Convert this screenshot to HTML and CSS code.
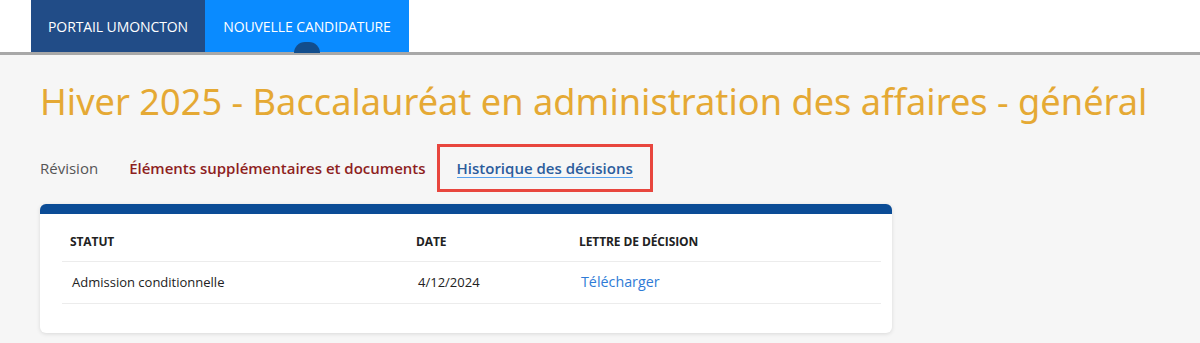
FILE: index.html
```html
<!DOCTYPE html>
<html lang="fr">
<head>
<meta charset="utf-8">
<title>Historique des décisions</title>
<link rel="stylesheet" href="styles.css">
</head>
<body>
<header class="topbar">
  <nav class="topnav">
    <a class="toptab toptab-portal" href="#">PORTAIL UMONCTON</a>
    <a class="toptab toptab-active" href="#">NOUVELLE CANDIDATURE</a>
  </nav>
</header>
<main class="page">
  <h1 class="title">Hiver 2025 - Baccalauréat en administration des affaires - général</h1>
  <nav class="subtabs">
    <a class="subtab subtab-review" href="#">Révision</a>
    <a class="subtab subtab-docs" href="#">Éléments supplémentaires et documents</a>
    <span class="subtab-box"><a class="subtab subtab-active" href="#">Historique des décisions</a></span>
  </nav>
  <section class="card">
    <table class="decisions">
      <thead>
        <tr>
          <th class="col-status">STATUT</th>
          <th class="col-date">DATE</th>
          <th class="col-letter">LETTRE DE DÉCISION</th>
        </tr>
      </thead>
      <tbody>
        <tr>
          <td class="cell-status">Admission conditionnelle</td>
          <td class="cell-date">4/12/2024</td>
          <td class="cell-letter"><a class="download" href="#">Télécharger</a></td>
        </tr>
      </tbody>
    </table>
  </section>
</main>
</body>
</html>
```

FILE: styles.css
```css
* { box-sizing: border-box; }
html, body { margin: 0; padding: 0; }
body {
  background: #f6f6f6;
  font-family: "Open Sans", "Noto Sans", sans-serif;
  color: #333;
  width: 1200px;
  height: 343px;
  overflow: hidden;
}
a { text-decoration: none; }

.topbar {
  background: #ffffff;
  height: 55px;
  border-bottom: 3px solid #a8a8a8;
}
.topnav {
  display: flex;
  padding-left: 31px;
  height: 52px;
}
.toptab {
  display: flex;
  align-items: center;
  justify-content: center;
  height: 52px;
  color: #ffffff;
  font-size: 14px;
  letter-spacing: -0.1px;
  position: relative;
}
.toptab-portal {
  background: #214c87;
  width: 174px;
}
.toptab-active {
  background: #0a8bff;
  width: 204px;
}
.toptab-active::after {
  content: "";
  position: absolute;
  left: 89px;
  bottom: -1px;
  width: 26px;
  height: 11px;
  border-radius: 13px 13px 0 0;
  background: #124d8c;
}

.page {
  padding: 23px 0 0 40px;
}
.title {
  margin: 0;
  font-family: "Noto Sans", "Open Sans", sans-serif;
  font-weight: 400;
  font-size: 36.2px;
  line-height: 46px;
  color: #e5a934;
}
.subtabs {
  display: flex;
  align-items: center;
  margin-top: 20px;
  font-size: 15px;
}
.subtab { line-height: 20px; }
.subtab-review {
  color: #555555;
  margin-right: 31px;
}
.subtab-docs {
  color: #8e1f1f;
  font-weight: 600;
  margin-right: 11px;
}
.subtab-box {
  border: 3px solid #e8463e;
  padding: 11px 17px 11px 17px;
}
.subtab-active {
  color: #2b5c9c;
  font-weight: 600;
  border-bottom: 1px solid #57a2ee;
  display: inline-block;
  line-height: 18px;
}

.card {
  margin-top: 12px;
  width: 852px;
  background: #ffffff;
  border-top: 10px solid #0b4c96;
  border-radius: 6px;
  box-shadow: 0 1px 4px rgba(0, 0, 0, 0.12);
  padding: 14px 11px 29px 22px;
}
.decisions {
  width: 100%;
  border-collapse: collapse;
}
.decisions th {
  text-align: left;
  font-weight: 700;
  font-size: 12px;
  color: #222222;
  padding: 7px 8px 12px;
  line-height: 14px;
  border-bottom: 1px solid #ececec;
  letter-spacing: -0.1px;
}
.decisions td {
  padding: 13px 8px 14px 10px;
  line-height: 14px;
  border-bottom: 1px solid #ececec;
  color: #222222;
  font-size: 13px;
}
.col-status { width: 346px; }
.col-date { width: 163px; }
.download {
  color: #2f7bd6;
  font-size: 14.3px;
}
```
